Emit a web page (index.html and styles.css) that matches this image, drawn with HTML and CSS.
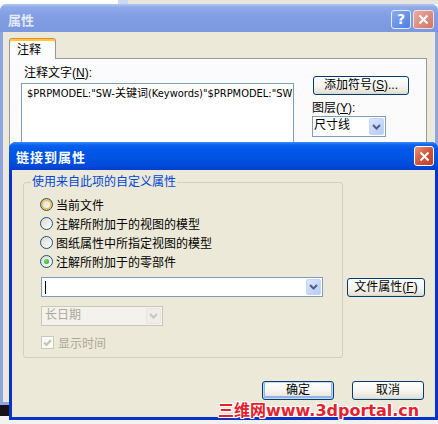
FILE: index.html
```html
<!DOCTYPE html>
<html>
<head>
  <meta charset="utf-8">
  <title>链接到属性</title>
  <link rel="stylesheet" href="styles.css">
</head>
<body>
  <!-- back dialog (inactive) -->
  <div class="window window-back">
    <div class="titlebar">
      <span class="title">属性</span>
      <span class="caption-btn help-btn">?</span>
      <span class="caption-btn close-btn">
        <svg width="11" height="11" viewBox="0 0 11 11"><path d="M1.5 1.5L9.5 9.5M9.5 1.5L1.5 9.5" stroke="#fff" stroke-width="2"/></svg>
      </span>
    </div>
    <div class="client">
      <div class="tabs">
        <span class="tab active">注释</span>
      </div>
      <div class="tab-panel">
        <div class="note-col">
          <div class="label note-label">注释文字(<u>N</u>):</div>
          <div class="textbox">$PRPMODEL:"SW-关键词(Keywords)"$PRPMODEL:"SW</div>
        </div>
        <div class="side-col">
          <div class="btn btn-symbol">添加符号(<u>S</u>)...</div>
          <div class="label layer-label">图层(<u>Y</u>):</div>
          <div class="combo combo-layer">
            <span class="combo-text">尺寸线</span>
            <span class="combo-arrow">
              <svg width="9" height="6" viewBox="0 0 9 6"><path d="M1 1L4.5 4.5L8 1" fill="none" stroke="#4d6185" stroke-width="2"/></svg>
            </span>
          </div>
        </div>
      </div>
    </div>
  </div>

  <!-- front dialog (active) -->
  <div class="window window-front">
    <div class="titlebar">
      <span class="title">链接到属性</span>
      <span class="caption-btn close-btn">
        <svg width="11" height="11" viewBox="0 0 11 11"><path d="M1.5 1.5L9.5 9.5M9.5 1.5L1.5 9.5" stroke="#fff" stroke-width="2"/></svg>
      </span>
    </div>
    <div class="client">
      <div class="front-main">
        <fieldset class="group">
          <legend>使用来自此项的自定义属性</legend>
          <div class="group-body">
            <div class="radio-row"><span class="radio hover"></span>当前文件</div>
            <div class="radio-row"><span class="radio"></span>注解所附加于的视图的模型</div>
            <div class="radio-row"><span class="radio"></span>图纸属性中所指定视图的模型</div>
            <div class="radio-row"><span class="radio checked"></span>注解所附加于的零部件</div>

            <div class="combo combo-prop">
              <span class="caret"></span>
              <span class="combo-arrow">
                <svg width="9" height="6" viewBox="0 0 9 6"><path d="M1 1L4.5 4.5L8 1" fill="none" stroke="#4d6185" stroke-width="2"/></svg>
              </span>
            </div>

            <div class="combo combo-date disabled">
              <span class="combo-text">长日期</span>
              <span class="combo-arrow">
                <svg width="9" height="6" viewBox="0 0 9 6"><path d="M1 1L4.5 4.5L8 1" fill="none" stroke="#c9c7ba" stroke-width="2"/></svg>
              </span>
            </div>

            <div class="check-row disabled">
              <span class="check">
                <svg width="9" height="9" viewBox="0 0 9 9"><path d="M1 4.5l2.5 2.5L8 2" fill="none" stroke="#c4c2b4" stroke-width="2"/></svg>
              </span>
              <span>显示时间</span>
            </div>
          </div>
        </fieldset>
        <div class="btn btn-file">文件属性(<u>F</u>)</div>
      </div>
      <div class="actions">
        <div class="btn btn-default">确定</div>
        <div class="btn">取消</div>
      </div>
    </div>
  </div>

  <div class="watermark">三维网www.3dportal.cn</div>
</body>
</html>
```

FILE: styles.css
```css
* {
  box-sizing: border-box;
}

body {
  margin: 0;
  width: 438px;
  height: 424px;
  overflow: hidden;
  position: relative;
  font-family: "Liberation Sans", "Noto Sans CJK SC", sans-serif;
  font-size: 12px;
  color: #000;
  background:
    linear-gradient(to right, #fff 0, #fff 118px, #c9d9f2 118px, #c9d9f2 128px, #e8e6dc 128px) top / 100% 4px no-repeat,
    linear-gradient(to bottom, #f6f8fc 0, #f6f8fc 405px, #141414 405px, #141414 416px, #f2f2f2 416px);
}

u {
  text-decoration: underline;
}

/* windows */

.window {
  position: absolute;
  display: flex;
  flex-direction: column;
  border-radius: 7px 7px 0 0;
}

.window-back {
  left: 0;
  top: 4px;
  width: 438px;
  height: 401px;
  background: #8ea4e3;
}

.window-front {
  left: 9px;
  top: 142px;
  width: 429px;
  height: 278px;
  background: #0a33c9;
}

.titlebar {
  display: flex;
  align-items: center;
  height: 28px;
  padding: 2px 4px 0 8px;
  border-radius: 7px 7px 0 0;
}

.window-back .titlebar {
  background: linear-gradient(#b3c6f3 0, #91abe9 3px, #829fe3 40%, #7b98e0 100%);
}

.window-front .titlebar {
  padding: 0 4px 0 7px;
  background: linear-gradient(#3d8df8 0, #0a62ef 3px, #0058e9 8px, #0054e3 55%, #004ad9 85%, #003dcc 100%);
}

.title {
  margin-right: auto;
  font-size: 13px;
  font-weight: bold;
  color: #fff;
}

.window-back .title {
  color: #e3eafa;
}

.window-front .title {
  letter-spacing: 1px;
}

.caption-btn {
  display: flex;
  align-items: center;
  justify-content: center;
  width: 20px;
  height: 19px;
  border: 1px solid #fff;
  border-radius: 3px;
  margin-left: 2px;
}

.help-btn {
  border-color: #e4ebfb;
  background: linear-gradient(135deg, #88a9f0, #4f7ddf);
  font-family: "DejaVu Sans", sans-serif;
  font-size: 14px;
  font-weight: bold;
  color: #fff;
}

.window-back .close-btn {
  width: 21px;
  border-color: #f1dede;
  background: linear-gradient(135deg, #e9aba0, #cf7567);
}

.window-front .close-btn {
  height: 20px;
  background: linear-gradient(135deg, #eb9378, #d1573c 50%, #c23c25);
}

.client {
  flex: 1;
  margin: 0 3px 3px;
  background: #ece9d8;
  display: flex;
  flex-direction: column;
  overflow: hidden;
}

/* back dialog content */

.window-back .client {
  padding: 6px 8px 0 6px;
}

.tabs {
  display: flex;
}

.tab {
  position: relative;
  z-index: 1;
  height: 21px;
  margin-bottom: -1px;
  padding: 2px 14px 0 7px;
  line-height: 18px;
  border: 1px solid #919b9c;
  border-bottom: none;
  border-top-color: #e68b2c;
  border-radius: 3px 3px 0 0;
  box-shadow: inset 0 2px #ffc83c;
  background: #fcfcfe;
}

.tab-panel {
  flex: 1;
  display: flex;
  padding: 7px 0 0 11px;
  border: 1px solid #919b9c;
  background: linear-gradient(#fcfcfe, #f4f3ee);
}

.label {
  line-height: 14px;
  white-space: nowrap;
}

.note-col {
  width: 273px;
  flex: none;
}

.note-label {
  margin-left: 3px;
}

.textbox {
  height: 120px;
  margin-top: 3px;
  padding: 3px 5px 2px;
  font-family: "Liberation Sans Narrow", "DejaVu Sans Condensed", "Noto Sans CJK SC", sans-serif;
  font-size: 11px;
  line-height: 13px;
  border: 1px solid #7f9db9;
  background: #fff;
  white-space: nowrap;
  overflow: hidden;
}

.side-col {
  flex: none;
  margin-left: 18px;
}

.btn {
  width: 72px;
  height: 19px;
  line-height: 17px;
  text-align: center;
  border: 1px solid #003c74;
  border-radius: 3px;
  background: linear-gradient(#ffffff, #f5f4ef 55%, #e6e3d8 90%, #d8d2c2);
  white-space: nowrap;
}

.btn-symbol {
  width: 96px;
  margin: 10px 0 0 1px;
}

.layer-label {
  margin-top: 6px;
}

.combo {
  display: flex;
  align-items: stretch;
  height: 20px;
  padding: 1px;
  border: 1px solid #7f9db9;
  background: #fff;
}

.combo-layer {
  width: 74px;
  height: 21px;
  margin-top: 1px;
}

.combo-text {
  flex: 1;
  line-height: 15px;
  white-space: nowrap;
}

.combo-arrow {
  display: flex;
  align-items: center;
  justify-content: center;
  width: 15px;
  margin-left: auto;
  border: 1px solid #c6d5f6;
  border-radius: 2px;
  background: linear-gradient(135deg, #dde7fd, #b4c9f6);
}

/* front dialog content */

.window-front .client {
  padding: 5px 0 0 11px;
}

.front-main {
  display: flex;
  align-items: flex-start;
}

.group {
  width: 320px;
  flex: none;
  margin: 0;
  padding: 0 0 8px 7px;
  min-width: 0;
  border: 1px solid #d0d0bf;
  border-radius: 3px;
}

.group legend {
  padding: 0 1px;
  line-height: 14px;
  color: #0046d5;
}

.group-body {
  padding: 6px 0 0 9px;
}

.radio-row,
.check-row {
  display: flex;
  align-items: center;
  height: 19px;
  gap: 3px;
  white-space: nowrap;
}

.radio {
  position: relative;
  width: 13px;
  height: 13px;
  border: 1px solid #1c5180;
  border-radius: 50%;
  background: linear-gradient(135deg, #dcd9cd, #ffffff);
}

.radio.hover {
  box-shadow: inset 0 0 0 2px #f9be48;
}

.radio.checked::after {
  content: "";
  position: absolute;
  left: 3px;
  top: 3px;
  width: 5px;
  height: 5px;
  border-radius: 50%;
  background: radial-gradient(circle at 35% 35%, #6fe36b, #21a121);
}

.combo-prop {
  width: 282px;
  margin: 6px 0 0 1px;
}

.caret {
  width: 1px;
  height: 13px;
  margin: 2px auto 0 2px;
  background: #000;
}

.combo.disabled {
  width: 122px;
  margin: 9px 0 0 1px;
  border-color: #c9c7ba;
  background: #f3f2ec;
  color: #aca899;
}

.combo.disabled .combo-text {
  padding-left: 2px;
}

.combo.disabled .combo-arrow {
  border-color: #e8e6dd;
  background: #efeee8;
}

.check-row {
  height: 13px;
  margin: 10px 0 0 1px;
  gap: 4px;
}

.check-row.disabled {
  color: #aca899;
}

.check {
  display: flex;
  align-items: center;
  justify-content: center;
  width: 13px;
  height: 13px;
  border: 1px solid #cac8bb;
  background: #fbfbf8;
}

.btn-file {
  width: 78px;
  flex: none;
  margin: 103px 0 0 4px;
}

.actions {
  display: flex;
  justify-content: flex-end;
  gap: 18px;
  margin-top: 23px;
  padding-right: 11px;
}

.btn-default {
  box-shadow: inset 0 0 0 1px #c2d6f7, inset 0 -1px 0 2px #93b2ea;
}

/* watermark over the screenshot */

.watermark {
  position: absolute;
  left: 218px;
  top: 403px;
  font-family: "DejaVu Sans", "Noto Sans CJK SC", sans-serif;
  font-size: 16px;
  font-weight: bold;
  line-height: 16px;
  color: #e5222c;
  white-space: nowrap;
  text-shadow: 1px 0 #fff, -1px 0 #fff, 0 1px #fff, 0 -1px #fff, 1px 1px #fff, -1px -1px #fff, 1px -1px #fff, -1px 1px #fff;
}
```
